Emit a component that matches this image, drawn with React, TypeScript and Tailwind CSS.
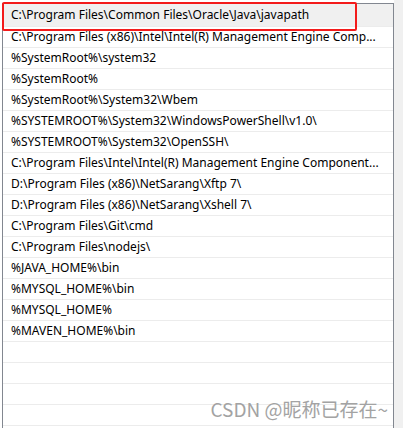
const paths = [
  "C:\\Program Files\\Common Files\\Oracle\\Java\\javapath",
  "C:\\Program Files (x86)\\Intel\\Intel(R) Management Engine Comp...",
  "%SystemRoot%\\system32",
  "%SystemRoot%",
  "%SystemRoot%\\System32\\Wbem",
  "%SYSTEMROOT%\\System32\\WindowsPowerShell\\v1.0\\",
  "%SYSTEMROOT%\\System32\\OpenSSH\\",
  "C:\\Program Files\\Intel\\Intel(R) Management Engine Component...",
  "D:\\Program Files (x86)\\NetSarang\\Xftp 7\\",
  "D:\\Program Files (x86)\\NetSarang\\Xshell 7\\",
  "C:\\Program Files\\Git\\cmd",
  "C:\\Program Files\\nodejs\\",
  "%JAVA_HOME%\\bin",
  "%MYSQL_HOME%\\bin",
  "%MYSQL_HOME%",
  "%MAVEN_HOME%\\bin",
  "",
  "",
  "",
  "",
  "",
];

export default function App() {
  return (
    <div className="relative flex h-[428px] w-[403px] overflow-hidden bg-white font-['Noto_Sans','Noto_Sans_CJK_SC',sans-serif] text-[12px] text-black">
      <div className="w-[2px] shrink-0 bg-white" />
      <div className="mt-[3px] w-[392px] shrink-0 border-x border-t border-[#828790] bg-white">
        {paths.map((p, i) => (
          <div
            key={i}
            className={
              i === 0
                ? "flex h-[23px] items-center border-b border-[#ececec] bg-[#f0f0f0] pl-[8px] pr-[2px]"
                : "flex h-[21px] items-center border-b border-[#ececec] pl-[8px] pr-[2px]"
            }
          >
            <span className="whitespace-nowrap leading-[16px]">{p}</span>
          </div>
        ))}
      </div>
      <div className="flex-1 bg-[#f0f0f0]" />

      <div className="absolute left-[2px] top-[2px] h-[29px] w-[355px] rounded-[2px] border-2 border-[#f31b1b]" />

      <div className="absolute right-[15px] top-[396px] font-['Noto_Sans_CJK_SC',sans-serif] text-[19px] leading-[26px] text-[#a3a3a3]">
        CSDN @昵称已存在~
      </div>
    </div>
  );
}
